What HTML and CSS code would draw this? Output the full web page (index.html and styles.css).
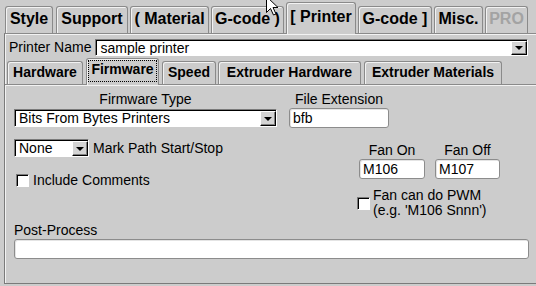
FILE: index.html
```html
<!DOCTYPE html>
<html>
<head>
  <title>Printer Settings</title>
  <link rel="stylesheet" href="styles.css">
</head>
<body>
  <div class="app">
    <div class="main-tabs">
      <div class="tab t-style">Style</div>
      <div class="tab t-support">Support</div>
      <div class="tab t-material">( Material</div>
      <div class="tab t-gcode1">G-code )</div>
      <div class="tab t-printer active">[ Printer</div>
      <div class="tab t-gcode2">G-code ]</div>
      <div class="tab t-misc">Misc.</div>
      <div class="tab t-pro disabled">PRO</div>
    </div>

    <div class="panel">
      <div class="printer-row">
        <span class="lbl">Printer Name</span>
        <div class="combo printer-combo">
          <span class="combo-text">sample printer</span>
          <span class="combo-btn"><i></i></span>
        </div>
      </div>

      <div class="sub-tabs">
        <div class="subtab s-hardware">Hardware</div>
        <div class="subtab s-firmware active"><span class="focus">Firmware</span></div>
        <div class="subtab s-speed">Speed</div>
        <div class="subtab s-exthw">Extruder Hardware</div>
        <div class="subtab s-extmat">Extruder Materials</div>
      </div>

      <div class="subpanel">
        <div class="row-top">
          <div class="field fw-type">
            <div class="lbl center">Firmware Type</div>
            <div class="combo">
              <span class="combo-text">Bits From Bytes Printers</span>
              <span class="combo-btn"><i></i></span>
            </div>
          </div>
          <div class="field ext">
            <div class="lbl center">File Extension</div>
            <div class="text-input">bfb</div>
          </div>
        </div>

        <div class="row-mid">
          <div class="col-left">
            <div class="mark-row">
              <div class="combo none-combo">
                <span class="combo-text">None</span>
                <span class="combo-btn"><i></i></span>
              </div>
              <span class="lbl">Mark Path Start/Stop</span>
            </div>
            <div class="check-row">
              <span class="check"></span>
              <span class="lbl">Include Comments</span>
            </div>
          </div>
          <div class="col-right">
            <div class="fan-row">
              <div class="field fan-on">
                <div class="lbl center">Fan On</div>
                <div class="text-input">M106</div>
              </div>
              <div class="field fan-off">
                <div class="lbl center">Fan Off</div>
                <div class="text-input">M107</div>
              </div>
            </div>
            <div class="pwm-row">
              <span class="check"></span>
              <span class="lbl two-line">Fan can do PWM<br>(e.g. 'M106 Snnn')</span>
            </div>
          </div>
        </div>

        <div class="post">
          <div class="lbl">Post-Process</div>
          <div class="text-input wide"></div>
        </div>
      </div>
    </div>

    <svg class="cursor" width="14" height="20" viewBox="0 0 14 20">
      <path d="M0.5 0.5 L0.5 16.5 L4.5 12.5 L7.5 19 L10 18 L7 11.5 L12 11.5 Z" fill="#fff" stroke="#000" stroke-width="1"/>
    </svg>
  </div>
</body>
</html>
```

FILE: styles.css
```css
body { margin: 0; background: #cccccc; font-family: "Liberation Sans", Arial, sans-serif; font-size: 14px; color: #000; }
.app { position: relative; width: 536px; height: 286px; overflow: hidden; padding-left: 4px; box-sizing: border-box; }

/* top tabs */
.main-tabs { display: flex; align-items: flex-end; gap: 2px; height: 33px; padding-left: 1px; }
.tab { height: 27px; padding-top: 3px; box-sizing: border-box; border: 1px solid #8a8a8a; border-bottom: none; border-radius: 3px 3px 0 0; box-shadow: inset 1px 1px 0 #f2f2f2; font-size: 16px; font-weight: bold; line-height: 18px; white-space: nowrap; text-align: center; overflow: hidden; }
.tab.active { height: 32px; padding-top: 5px; margin-bottom: -1px; background: #cccccc; position: relative; z-index: 1; }
.tab.disabled { color: #a3a3a3; }
.t-style { width: 48px; }
.t-support { width: 72px; margin-left: 1px; }
.t-material { width: 79px; }
.t-gcode1 { width: 73px; }
.t-printer { width: 70px; }
.t-gcode2 { width: 74px; }
.t-misc { width: 49px; }
.t-pro { width: 43px; }

/* outer panel */
.panel { width: 560px; height: 251px; box-sizing: border-box; border-top: 1px solid #8a8a8a; border-left: 1px solid #7a7a7a; border-bottom: 1px solid #7a7a7a; box-shadow: inset 1px 1px 0 #f2f2f2; }
.printer-row { display: flex; align-items: center; gap: 4px; padding: 4px 0 0 4px; height: 18px; }
.lbl { line-height: 16px; white-space: nowrap; }
.lbl.center { text-align: center; }

/* combo boxes */
.combo { display: flex; height: 18px; box-sizing: border-box; background: #fff; border-top: 1px solid #7a7a7a; border-left: 1px solid #7a7a7a; border-right: 1px solid #fff; border-bottom: 1px solid #fff; box-shadow: inset 1px 1px 0 #000; }
.printer-combo { width: 433px; height: 17px; }
.combo-text { flex: 1; padding: 0 0 0 4px; line-height: 16px; overflow: hidden; }
.combo-btn { width: 16px; margin: 1px 0 0 0; box-sizing: border-box; background: #d4d4d4; border-top: 1px solid #fff; border-left: 1px solid #fff; border-right: 1px solid #000; border-bottom: 1px solid #000; box-shadow: inset -1px -1px 0 #808080; display: flex; align-items: center; justify-content: center; }
.combo-btn i { width: 0; height: 0; border-left: 4px solid transparent; border-right: 4px solid transparent; border-top: 4px solid #000; margin-top: 1px; }

/* sub tabs */
.sub-tabs { display: flex; align-items: flex-end; gap: 3px; height: 26px; margin-top: 2px; padding-left: 2px; }
.subtab { height: 23px; padding-top: 2px; box-sizing: border-box; border: 1px solid #8a8a8a; border-bottom: none; border-radius: 3px 3px 0 0; box-shadow: inset 1px 1px 0 #f2f2f2; font-weight: bold; line-height: 17px; white-space: nowrap; text-align: center; }
.subtab.active { height: 27px; margin-bottom: -1px; padding: 1px 1px 0; background: #cccccc; position: relative; z-index: 1; }
.focus { display: block; border: 1px dotted #000; padding-bottom: 3px; line-height: 17px; }
.s-hardware { width: 76px; }
.s-firmware { width: 73px; }
.s-speed { width: 54px; }
.s-exthw { width: 143px; margin-left: -1px; }
.s-extmat { width: 138px; }

.subpanel { border-top: 1px solid #8a8a8a; box-shadow: inset 0 1px 0 #f2f2f2; padding: 6px 0 0 9px; height: 199px; box-sizing: border-box; }

/* firmware fields */
.row-top { display: flex; gap: 12px; }
.fw-type { width: 263px; }
.fw-type .combo { margin-top: 2px; }
.ext { width: 100px; }
.text-input { height: 20px; box-sizing: border-box; margin-top: 1px; background: #fff; border: 1px solid #8c8c8c; border-radius: 3px; box-shadow: inset 1px 1px 0 #e4e4e4; padding-left: 3px; line-height: 18px; }

.row-mid { display: flex; margin-top: 11px; }
.col-left { width: 343px; }
.mark-row { display: flex; align-items: center; gap: 4px; }
.none-combo { width: 75px; }
.check-row { display: flex; align-items: center; gap: 4px; margin-top: 15px; padding-left: 2px; }
.check { width: 13px; height: 13px; box-sizing: border-box; background: #fff; border-top: 1px solid #7a7a7a; border-left: 1px solid #7a7a7a; border-right: 1px solid #fff; border-bottom: 1px solid #fff; box-shadow: inset 1px 1px 0 #000; flex: none; }

.col-right { margin-top: 3px; }
.fan-row { display: flex; gap: 10px; padding-left: 2px; }
.fan-on { width: 66px; }
.fan-off { width: 65px; }
.pwm-row { display: flex; align-items: center; gap: 3px; margin-top: 9px; }
.two-line { line-height: 15px; }

.post { margin-top: 4px; }
.text-input.wide { width: 515px; }

.cursor { position: absolute; left: 266px; top: -4px; }
```
